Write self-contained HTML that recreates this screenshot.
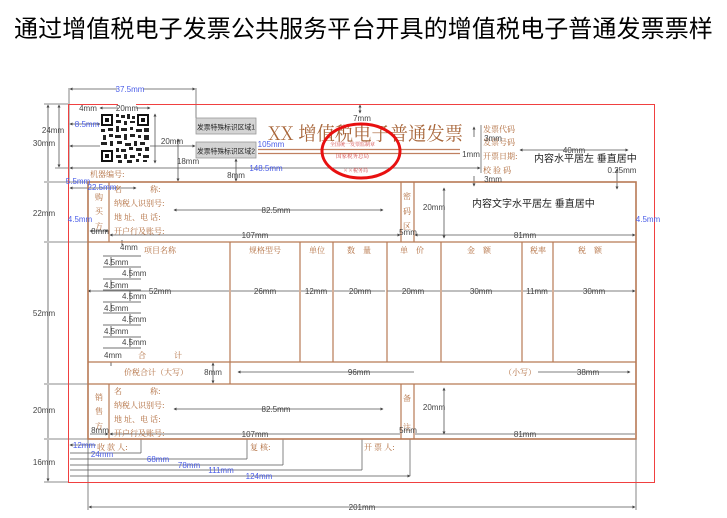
<!DOCTYPE html>
<html><head><meta charset="utf-8"><style>
body{margin:0;width:727px;height:518px;background:#fff;overflow:hidden;position:relative}
.t{position:absolute;left:14px;top:9px;font:24px "Liberation Sans","Noto Sans CJK SC",sans-serif;color:#000;white-space:nowrap;letter-spacing:0.1px}
svg{position:absolute;left:0;top:0}
.d{font:8px "Liberation Sans",sans-serif;fill:#444}
.b{font:8px "Liberation Sans",sans-serif;fill:#4a5de8}
.l{font:8px "Noto Serif CJK SC",serif;fill:#b06a3a}
.c{font:10px "Liberation Sans","Noto Sans CJK SC",sans-serif;fill:#222}
</style></head><body>
<div class="t">通过增值税电子发票公共服务平台开具的增值税电子普通发票票样</div>
<svg width="727" height="518" viewBox="0 0 727 518">
<defs>
<marker id="a" viewBox="0 0 6 6" refX="5" refY="3" markerWidth="4" markerHeight="4" orient="auto-start-reverse"><path d="M0,0L6,3L0,6z" fill="#444"/></marker>
</defs>
<g stroke="#666" stroke-width="0.8" fill="none">
<path d="M69,88V182M196,88V118M44,104H68M44,182H88M44,242H88M44,384H88M44,439H88M44,482H68M55,168H69M481,125V173M88,439V510M636,439V510"/>
<path d="M141,439V453M247,439V459M283,439V465M362,439V470M410,439V476"/>
</g>
<g stroke="#555" stroke-width="0.8" fill="none" marker-start="url(#a)" marker-end="url(#a)">
<path d="M70,89H195"/>
<path d="M59,105V167"/>
<path d="M48,105V181M48,183V241M48,243V383M48,385V438M48,440V481"/>
<path d="M100,108H150"/>
<path d="M70,124H100"/>
<path d="M155,114V163"/>
<path d="M178,139V181"/>
<path d="M70,146H195"/>
<path d="M70,168H480"/>
<path d="M236,159V181"/>
<path d="M70,188H136"/>
<path d="M360,105V113"/>
<path d="M174,210H383"/>
<path d="M110,235H400"/>
<path d="M90,231H108"/>
<path d="M415,235H635"/>
<path d="M444,188V238"/>
<path d="M520,150H628"/>
<path d="M617,169V189"/>
<path d="M88,291H229M231,291H299M301,291H332M334,291H385M387,291H440M442,291H521M523,291H552M554,291H635"/>
<path d="M238,372H414M538,372H630"/>
<path d="M213,363V383"/>
<path d="M174,409H383"/>
<path d="M110,434H400M415,434H635M90,434H108"/>
<path d="M444,388V434"/>
<path d="M70,445H96M70,453H141M70,459H247M70,465H283M70,470H362M70,476H410"/>
<path d="M89,507H635"/>
<path d="M474,127V137M474,176V186"/>
</g>
<g stroke="#444" stroke-width="0.8">
<path d="M103,256H141M103,267H141M103,279H141M103,290H141M103,302H141M103,313H141M103,325H141M103,337H141M103,348H141M122,240V245M111,362V366"/>
<path d="M111,257V266M130,268V278M111,280V289M130,291V301M111,303V312M130,314V324M111,326V336M130,338V347"/>
</g>
<g class="d">
<text x="104" y="265">4.5mm</text><text x="122" y="276">4.5mm</text>
<text x="104" y="288">4.5mm</text><text x="122" y="299">4.5mm</text>
<text x="104" y="311">4.5mm</text><text x="122" y="322">4.5mm</text>
<text x="104" y="334">4.5mm</text><text x="122" y="345">4.5mm</text>
<text x="120" y="250">4mm</text><text x="104" y="358">4mm</text>
</g>
<rect x="68.5" y="104.5" width="586" height="378" fill="none" stroke="#f04040" stroke-width="1"/>
<rect x="100" y="113" width="50" height="50" fill="#fff"/>
<g fill="#111">
<rect x="101" y="114" width="12" height="12"/><rect x="137" y="114" width="12" height="12"/><rect x="101" y="150" width="12" height="12"/>
</g>
<g fill="#fff"><rect x="103" y="116" width="8" height="8"/><rect x="139" y="116" width="8" height="8"/><rect x="103" y="152" width="8" height="8"/></g>
<g fill="#111"><rect x="105" y="118" width="4" height="4"/><rect x="141" y="118" width="4" height="4"/><rect x="105" y="154" width="4" height="4"/></g>
<path fill="#222" d="M116,114h3v3h-3zM121,115h4v3h-4zM127,114h3v5h-3zM132,116h3v3h-3zM116,120h5v3h-5zM124,121h3v4h-3zM130,121h5v2h-5zM101,129h4v3h-4zM108,128h5v3h-5zM116,126h3v6h-3zM121,128h6v3h-6zM130,127h3v3h-3zM136,129h6v3h-6zM144,128h5v4h-5zM103,135h3v5h-3zM109,134h4v3h-4zM115,135h6v3h-6zM124,134h3v6h-3zM130,134h5v3h-5zM138,135h3v3h-3zM144,135h5v5h-5zM101,142h6v3h-6zM110,141h3v5h-3zM117,141h5v3h-5zM125,143h6v3h-6zM134,141h3v5h-3zM140,142h5v3h-5zM116,148h3v4h-3zM121,149h5v3h-5zM129,147h4v3h-4zM136,148h6v3h-6zM145,147h4v4h-4zM116,155h5v3h-5zM124,154h3v5h-3zM130,155h5v3h-5zM138,153h3v3h-3zM143,155h6v3h-6zM118,160h4v3h-4zM127,160h5v3h-5zM136,159h3v3h-3zM143,160h4v2h-4z"/>
<rect x="196" y="118" width="60" height="16" fill="#d4d4d4" stroke="#999" stroke-width="0.8"/>
<rect x="196" y="142" width="60" height="16" fill="#d4d4d4" stroke="#999" stroke-width="0.8"/>
<text x="197" y="129.5" font-family="Liberation Sans,Noto Sans CJK SC,sans-serif" font-size="7" fill="#222" textLength="58" lengthAdjust="spacingAndGlyphs">发票特殊标识区域1</text>
<text x="197" y="153.5" font-family="Liberation Sans,Noto Sans CJK SC,sans-serif" font-size="7" fill="#222" textLength="58" lengthAdjust="spacingAndGlyphs">发票特殊标识区域2</text>
<text x="268" y="140" font-family="Noto Serif CJK SC,serif" font-size="19" fill="#a8663a" textLength="195" lengthAdjust="spacingAndGlyphs">XX 增值税电子普通发票</text>
<path d="M258,149.5H460M258,153.5H460" stroke="#c08060" stroke-width="1.3"/>
<ellipse cx="361" cy="151" rx="39" ry="27" fill="none" stroke="#e81010" stroke-width="3"/>
<text x="336" y="158" font-family="Noto Serif CJK SC,serif" font-size="5.5" fill="#d04040">国家税务总局</text>
<text x="343" y="172" font-family="Noto Serif CJK SC,serif" font-size="5" fill="#d04040">××税务局</text>
<text x="330" y="146" font-family="Noto Serif CJK SC,serif" font-size="5" fill="#d04040">全国统一发票监制章</text>
<g class="l"><text x="483" y="132">发票代码</text><text x="483" y="145">发票号码</text><text x="483" y="159">开票日期:</text><text x="483" y="173">校 验 码</text></g>
<text x="534" y="162" class="c" font-size="9.5">内容水平居左 垂直居中</text>
<text x="472" y="207" class="c" font-size="9.5">内容文字水平居左 垂直居中</text>
<g stroke="#b87a55" fill="none" stroke-width="1.2">
<rect x="88" y="182" width="548" height="257" stroke-width="1.6"/>
<path d="M88,242H636M88,362H636M88,384H636"/>
<path d="M109,182V242M401,182V242M414,182V242M109,384V439M401,384V439M414,384V439"/>
<path d="M230,242V384M300,242V362M333,242V362M387,242V362M441,242V362M522,242V362M553,242V362"/>
</g>
<g class="l">
<text x="90" y="177">机器编号:</text>
<text x="95" y="200">购</text><text x="95" y="214">买</text><text x="95" y="229">方</text>
<text x="114" y="192">名</text><text x="150" y="192">称:</text><text x="114" y="206">纳税人识别号:</text><text x="114" y="220">地 址、电 话:</text><text x="114" y="234">开户行及账号:</text>
<text x="403" y="199">密</text><text x="403" y="214">码</text><text x="403" y="229">区</text>
<text x="144" y="253">项目名称</text><text x="249" y="253">规格型号</text><text x="309" y="253">单位</text><text x="347" y="253">数　量</text><text x="400" y="253">单　价</text><text x="467" y="253">金　额</text><text x="530" y="253">税率</text><text x="578" y="253">税　额</text>
<text x="138" y="358">合</text><text x="174" y="358">计</text>
<text x="124" y="375">价税合计（大写）</text><text x="504" y="375">（小写）</text>
<text x="95" y="400">销</text><text x="95" y="414">售</text><text x="95" y="429">方</text>
<text x="114" y="394">名</text><text x="150" y="394">称:</text><text x="114" y="408">纳税人识别号:</text><text x="114" y="422">地 址、电 话:</text><text x="114" y="436">开户行及账号:</text>
<text x="403" y="401">备</text><text x="403" y="430">注</text>
<text x="97" y="450">收 款 人:</text><text x="250" y="450">复 核:</text><text x="364" y="450">开 票 人:</text>
</g>
<g class="d" text-anchor="middle">
<rect x="118" y="104" width="18" height="8" fill="#fff"/>
<text x="88" y="111">4mm</text><text x="127" y="111">20mm</text>
<text x="172" y="144">20mm</text><text x="188" y="164">18mm</text><text x="236" y="178">8mm</text>
<text x="362" y="121">7mm</text><text x="471" y="157">1mm</text>
<text x="493" y="141">3mm</text><text x="493" y="182">3mm</text>
<text x="574" y="153">40mm</text><text x="622" y="173">0.25mm</text>
<text x="276" y="213">82.5mm</text><text x="255" y="238">107mm</text><text x="100" y="234">8mm</text>
<text x="408" y="235">5mm</text><text x="525" y="238">81mm</text><text x="434" y="210">20mm</text>
<text x="160" y="294">52mm</text><text x="265" y="294">26mm</text><text x="316" y="294">12mm</text><text x="360" y="294">20mm</text><text x="413" y="294">20mm</text><text x="481" y="294">30mm</text><text x="537" y="294">11mm</text><text x="594" y="294">30mm</text>
<text x="213" y="375">8mm</text><text x="359" y="375">96mm</text><text x="588" y="375">38mm</text>
<text x="276" y="412">82.5mm</text><text x="255" y="437">107mm</text><text x="100" y="433">8mm</text>
<text x="408" y="433">5mm</text><text x="525" y="437">81mm</text><text x="434" y="410">20mm</text>
<text x="53" y="133">24mm</text><text x="44" y="146">30mm</text><text x="44" y="216">22mm</text><text x="44" y="316">52mm</text><text x="44" y="413">20mm</text><text x="44" y="465">16mm</text>
<text x="362" y="510">201mm</text>
</g>
<rect x="117" y="85" width="26" height="8" fill="#fff"/>
<text x="130" y="92" class="b" text-anchor="middle">37.5mm</text>
<g class="b" text-anchor="middle">
<text x="87" y="127">8.5mm</text><text x="78" y="184">5.5mm</text><text x="102" y="190">22.5mm</text>
<text x="271" y="147">105mm</text><text x="266" y="171">148.5mm</text>
<text x="80" y="222">4.5mm</text><text x="648" y="222">4.5mm</text>
<text x="84" y="448">12mm</text><text x="102" y="457">24mm</text><text x="158" y="462">68mm</text><text x="189" y="468">78mm</text><text x="221" y="473">111mm</text><text x="259" y="479">124mm</text>
</g>
</svg>
</body></html>
